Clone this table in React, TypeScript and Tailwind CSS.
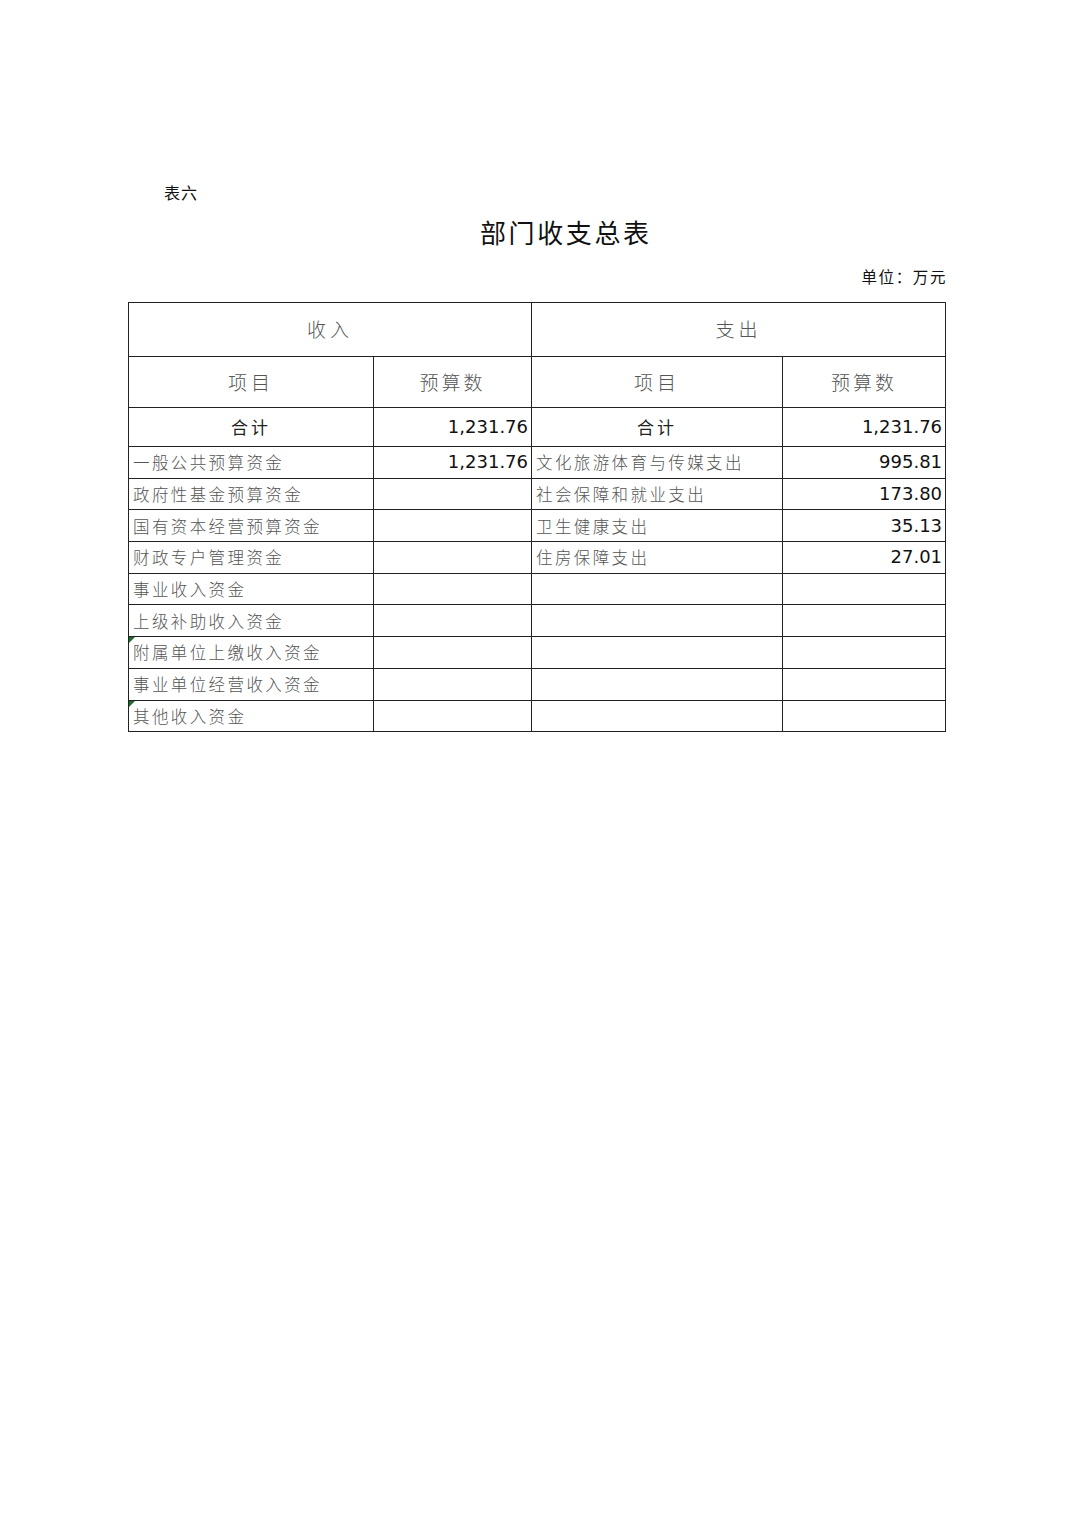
import React from "react";

type Row = { a: string; b: string; c: string; d: string; mark?: boolean };

const rows: Row[] = [
  { a: "一般公共预算资金", b: "1,231.76", c: "文化旅游体育与传媒支出", d: "995.81" },
  { a: "政府性基金预算资金", b: "", c: "社会保障和就业支出", d: "173.80" },
  { a: "国有资本经营预算资金", b: "", c: "卫生健康支出", d: "35.13" },
  { a: "财政专户管理资金", b: "", c: "住房保障支出", d: "27.01" },
  { a: "事业收入资金", b: "", c: "", d: "" },
  { a: "上级补助收入资金", b: "", c: "", d: "" },
  { a: "附属单位上缴收入资金", b: "", c: "", d: "", mark: true },
  { a: "事业单位经营收入资金", b: "", c: "", d: "" },
  { a: "其他收入资金", b: "", c: "", d: "", mark: true },
];

const cell = "border-[1.5px] border-[#222]";
const head = `${cell} text-center text-[19px] text-[#555] font-light font-['Noto_Sans_CJK_SC','Noto_Sans',sans-serif]`;
const total = `${cell} text-center text-[17px] text-[#222] tracking-[3px] font-['Noto_Sans_CJK_SC','Noto_Sans',sans-serif]`;
const label = `${cell} pl-[4px] text-[16.5px] leading-[20px] text-[#555] tracking-[2.4px] font-light whitespace-nowrap font-['Noto_Sans_CJK_SC','Noto_Sans',sans-serif]`;
const numCell = `${cell} text-right pr-[3px] text-[18px] leading-[20px] text-[#111] font-['DejaVu_Sans','Liberation_Sans',sans-serif]`;

export default function App() {
  return (
    <div className="w-[1074px] h-[1520px] bg-white font-['Noto_Sans_CJK_SC','Noto_Sans',sans-serif]">
      <div className="pt-[181px] pl-[164px] text-[16px] leading-[22px] text-[#111] tracking-[1px]">
        表六
      </div>
      <div className="mt-[12px] pl-[480px] text-[26px] leading-[34px] text-[#111] tracking-[2.6px]">
        部门收支总表
      </div>
      <div className="mt-[16px] w-[947px] text-right text-[15.5px] leading-[22px] text-[#111] tracking-[1.6px]">
        单位：万元
      </div>
      <div className="mt-[15px] ml-[128px]">
        <table className="border-collapse table-fixed w-[817px]">
          <colgroup>
            <col className="w-[245px]" />
            <col className="w-[158px]" />
            <col className="w-[251px]" />
            <col className="w-[163px]" />
          </colgroup>
          <tbody>
            <tr className="h-[54px]">
              <td colSpan={2} className={`${head} tracking-[4px]`}>收入</td>
              <td colSpan={2} className={`${head} tracking-[4px]`}>支出</td>
            </tr>
            <tr className="h-[51px]">
              <td className={`${head} tracking-[4px]`}>项目</td>
              <td className={`${head} tracking-[3px]`}>预算数</td>
              <td className={`${head} tracking-[4px]`}>项目</td>
              <td className={`${head} tracking-[3px]`}>预算数</td>
            </tr>
            <tr className="h-[39px]">
              <td className={total}>合计</td>
              <td className={numCell}>1,231.76</td>
              <td className={total}>合计</td>
              <td className={numCell}>1,231.76</td>
            </tr>
            {rows.map((r, i) => (
              <tr key={i} className="h-[31.7px]">
                <td className={`${label} relative`}>
                  {r.mark && (
                    <span className="absolute left-0 top-0 w-0 h-0 border-t-[6px] border-r-[6px] border-t-[#1e6b2e] border-r-transparent" />
                  )}
                  {r.a}
                </td>
                <td className={numCell}>{r.b}</td>
                <td className={label}>{r.c}</td>
                <td className={numCell}>{r.d}</td>
              </tr>
            ))}
          </tbody>
        </table>
      </div>
    </div>
  );
}
